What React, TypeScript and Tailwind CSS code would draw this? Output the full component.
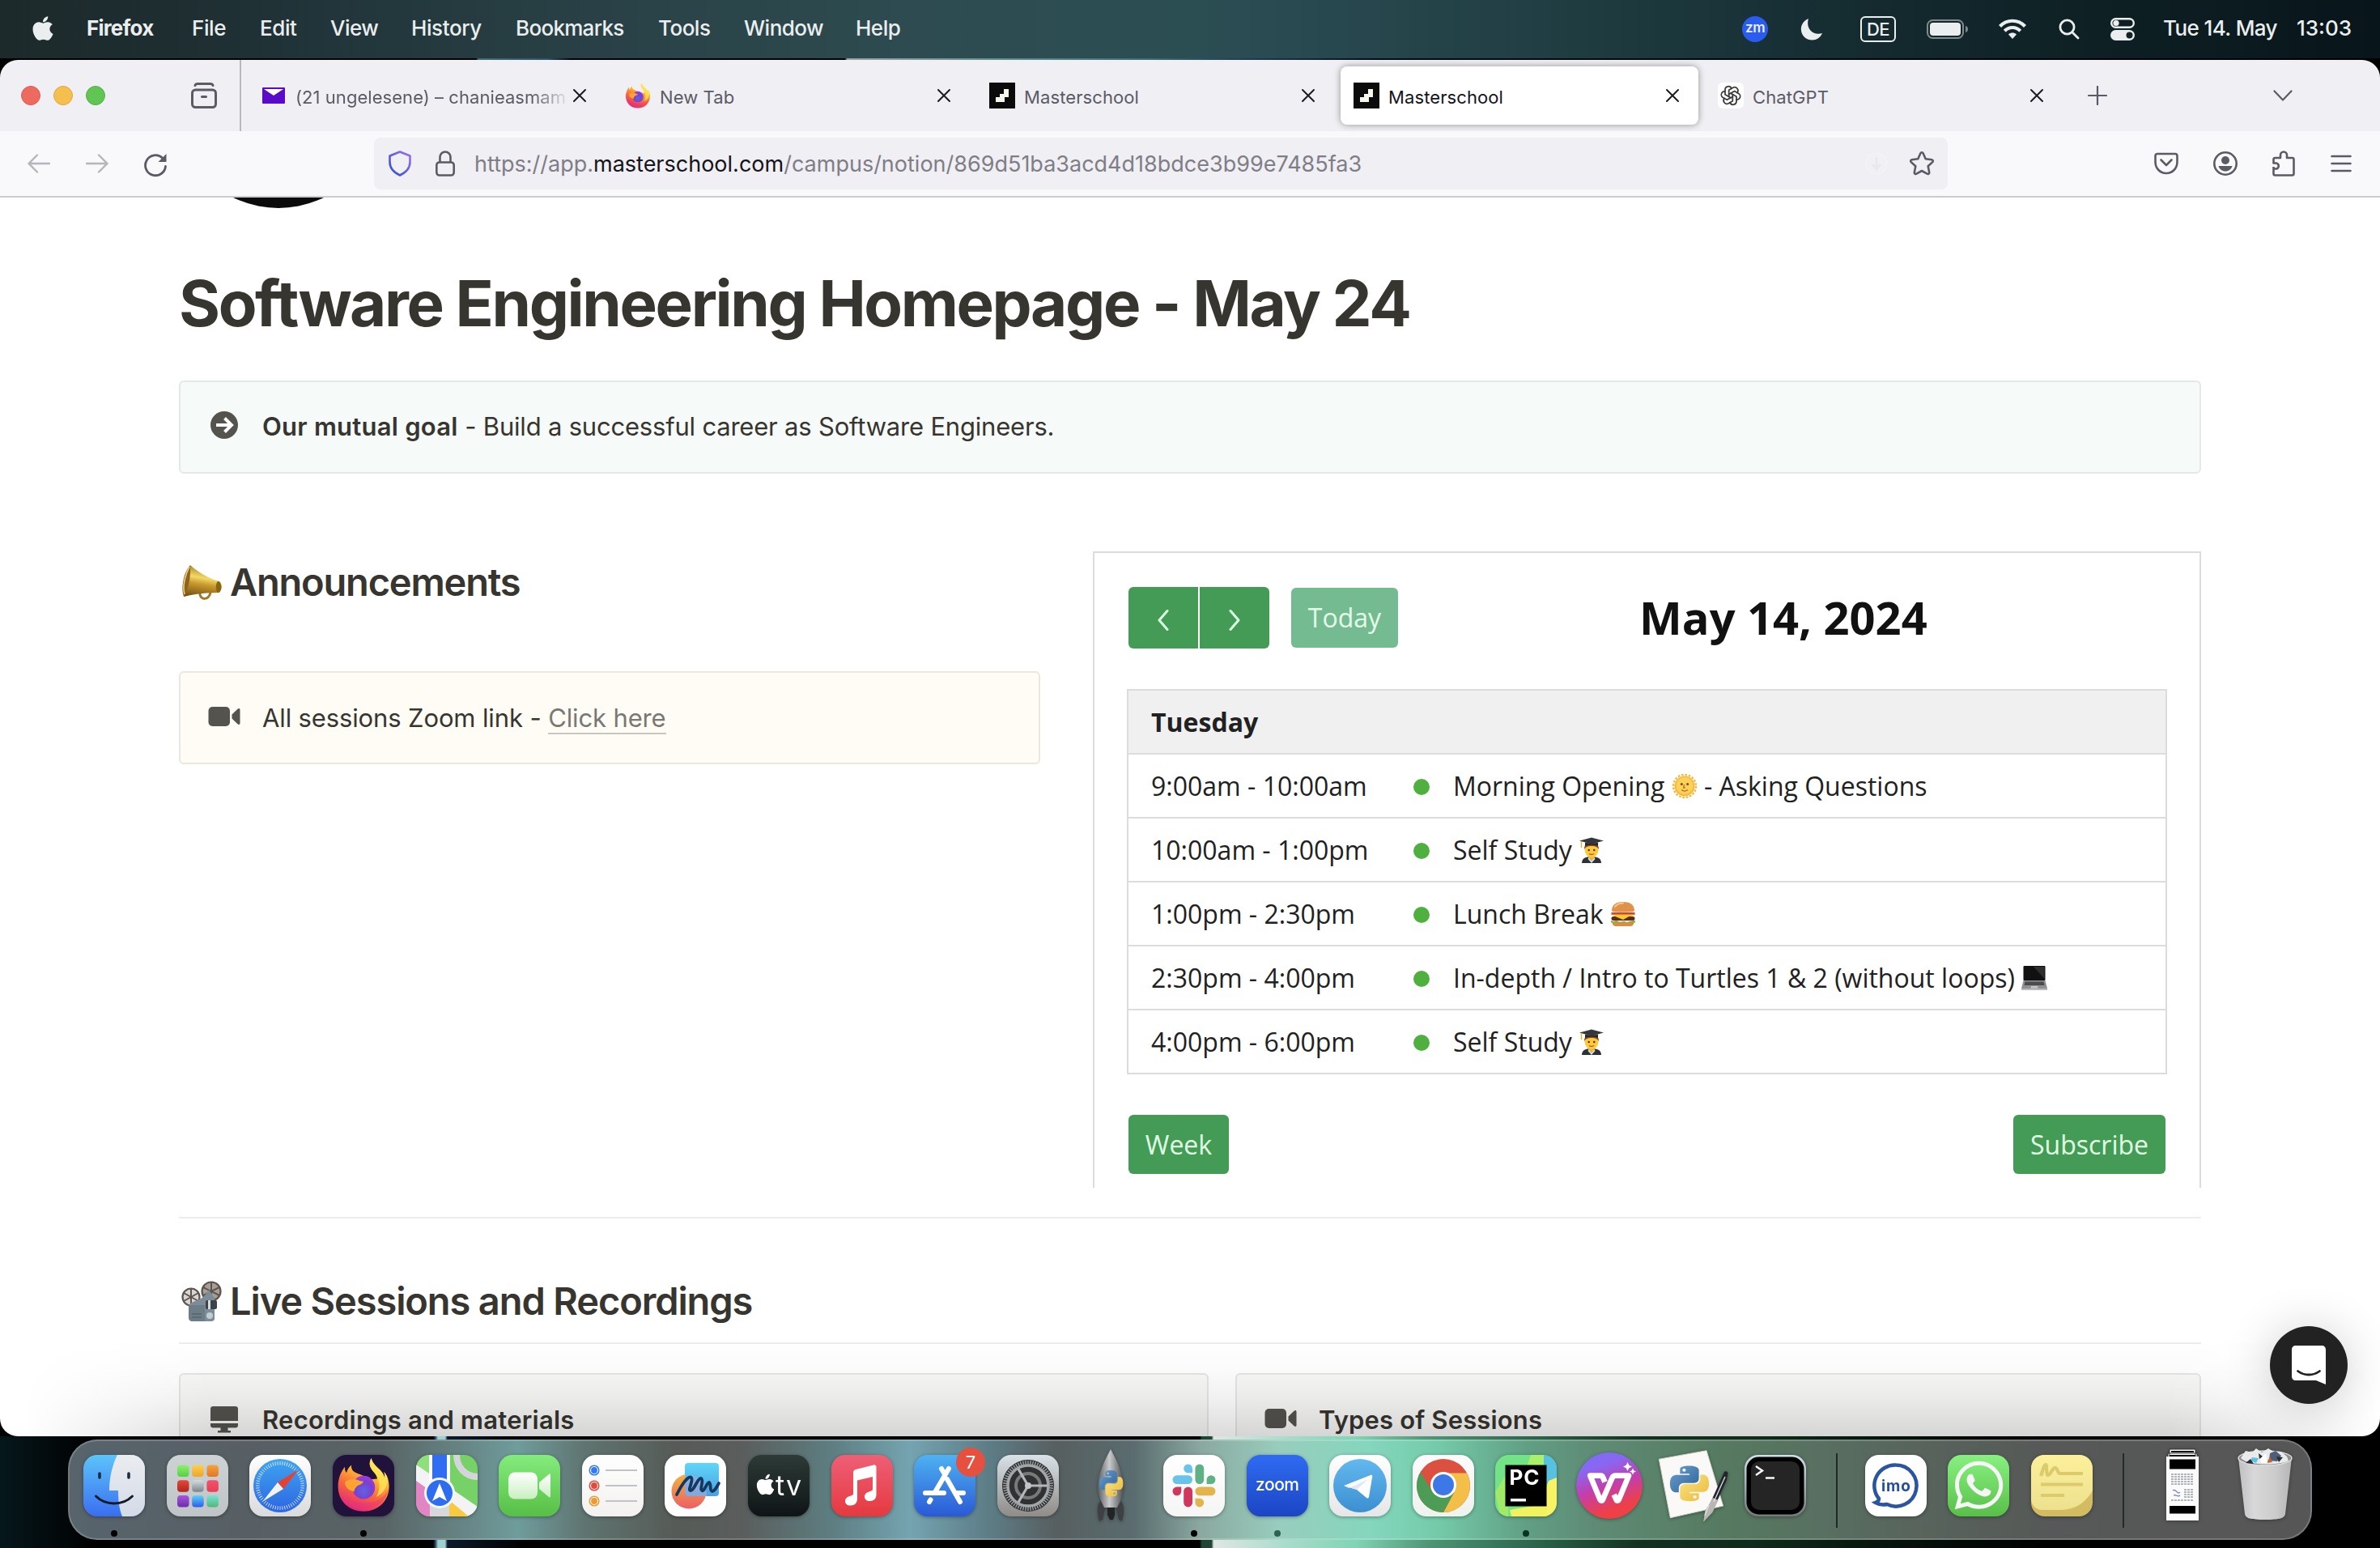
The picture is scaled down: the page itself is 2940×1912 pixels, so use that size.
import React from "react";
import { FaApple, FaWhatsapp } from "react-icons/fa";
import { TbBrandOpenai } from "react-icons/tb";

const PY_TOP =
  "M14.25.18l.9.2.73.26.59.3.45.32.34.34.25.34.16.33.1.3.04.26.02.2-.01.13V8.5l-.05.63-.13.55-.21.46-.26.38-.3.31-.33.25-.35.19-.35.14-.33.1-.3.07-.26.04-.21.02H8.77l-.69.05-.59.14-.5.22-.41.27-.33.32-.27.35-.2.36-.15.37-.1.35-.07.32-.04.27-.02.21v3.06H3.17l-.21-.03-.28-.07-.32-.12-.35-.18-.36-.26-.36-.36-.35-.46-.32-.59-.28-.73-.21-.88-.14-1.05-.05-1.23.06-1.22.16-1.04.24-.87.32-.71.36-.57.4-.44.42-.33.42-.24.4-.16.36-.1.32-.05.24-.01h.16l.06.01h8.16v-.83H6.18l-.01-2.75-.02-.37.05-.34.11-.31.17-.28.25-.26.31-.23.38-.2.44-.18.51-.15.58-.12.64-.1.71-.06.77-.04.84-.02 1.27.05zm-6.3 1.98l-.23.33-.08.41.08.41.23.34.33.22.41.09.41-.09.33-.22.23-.34.08-.41-.08-.41-.23-.33-.33-.22-.41-.09-.41.09z";

function PythonMark() {
  return (
    <>
      <path d={PY_TOP} fill="url(#pyBlue)" />
      <path d={PY_TOP} fill="url(#pyYellow)" transform="rotate(180 12 12)" />
    </>
  );
}

function SharedGradients() {
  return (
    <svg width="0" height="0" className="absolute">
      <defs>
        <linearGradient id="pyBlue" x1="0" y1="0" x2="1" y2="1">
          <stop offset="0" stopColor="#6aa0d0" />
          <stop offset="1" stopColor="#2f6296" />
        </linearGradient>
        <linearGradient id="pyYellow" x1="0" y1="0" x2="1" y2="1">
          <stop offset="0" stopColor="#e9b93a" />
          <stop offset="1" stopColor="#fbe483" />
        </linearGradient>
        <linearGradient id="ffBody" x1="0.8" y1="0" x2="0.35" y2="1">
          <stop offset="0" stopColor="#fff36b" />
          <stop offset="0.35" stopColor="#fdb833" />
          <stop offset="0.65" stopColor="#f76540" />
          <stop offset="1" stopColor="#e2267b" />
        </linearGradient>
        <radialGradient id="ffGlobe" cx="0.5" cy="0.65" r="0.65">
          <stop offset="0" stopColor="#5f63e0" />
          <stop offset="0.6" stopColor="#7a3fd0" />
          <stop offset="1" stopColor="#a33ae0" />
        </radialGradient>
        <linearGradient id="shield" x1="1" y1="0" x2="0" y2="1">
          <stop offset="0" stopColor="#9a6ff0" />
          <stop offset="1" stopColor="#2a4fd0" />
        </linearGradient>
      </defs>
    </svg>
  );
}

/* Firefox mark on a 64 unit square */
function FirefoxMark() {
  return (
    <>
      <path
        d="M41 1c-3 6-2 10 2 15 3 3 5 6 5 9l-10 1C33 20 22 19 19 15c-1-2-2-4-1-6-3 2-5 5-6 9-2-2-2-4-2-7C5 17 2 25 2 34c0 17 13 29 30 29s30-12 30-29c0-7-2-13-6-17 1 3 1 5 1 7C54 13 44 12 41 1z"
        fill="url(#ffBody)"
      />
      <path d="M41 1c-3 6-2 10 2 15 8 8 10 20 4 30 8-3 14-12 13-22-1-3-2-5-4-7 1 3 1 5 1 7C54 13 44 12 41 1z" fill="#fde85a" opacity="0.75" />
      <circle cx="32" cy="35" r="13.5" fill="url(#ffGlobe)" />
      <path
        d="M10 29c4-4 10-4 14-3 2 1 5 2 8 2-1 3-5 4-7 5-2 2-4 4-4 7-6-1-11-5-11-11z"
        fill="#fda32f"
      />
      <path d="M4 42c5 12 16 19 28 19 15 0 27-10 29-24-5 11-16 17-29 16C19 53 9 49 4 42z" fill="#e8367a" opacity="0.45" />
    </>
  );
}

function MasterschoolIcon() {
  return (
    <svg viewBox="0 0 32 32" className="size-8 shrink-0">
      <rect width="32" height="32" fill="#0b0b0b" />
      <path d="M8 24v-6h5v-4h5V8h6v10h-5v6z" fill="#f6f6ee" />
    </svg>
  );
}

function CloseIcon() {
  return (
    <svg viewBox="0 0 20 20" className="size-5 shrink-0" stroke="#1b1b22" strokeWidth="2" strokeLinecap="round">
      <path d="M3 3l14 14M17 3L3 17" />
    </svg>
  );
}

function MenuBar() {
  return (
    <div className="flex h-[72px] items-center bg-[linear-gradient(90deg,#1c2a2b_0%,#1e2d30_7%,#21353a_14%,#294146_25%,#2d4b50_38%,#2b4e53_50%,#28484f_56%,#213f44_64%,#1c373c_70%,#142a2f_79%,#0e2024_88%,#08151a_100%)] pb-[3px] font-['Inter'] text-[26px] leading-[32px] text-[#ebeeee]">
      <div className="flex w-[107px] shrink-0 pl-[39px]">
        <FaApple className="h-[34px] w-[28px]" />
      </div>
      <div className="w-[130px] font-bold tracking-[-0.8px]">Firefox</div>
      <div className="w-[84px] font-medium tracking-[-0.4px]">File</div>
      <div className="w-[87px] font-medium tracking-[-0.4px]">Edit</div>
      <div className="w-[100px] font-medium tracking-[-0.5px]">View</div>
      <div className="w-[129px] font-medium tracking-[-0.4px]">History</div>
      <div className="w-[176px] font-medium tracking-[-0.7px]">Bookmarks</div>
      <div className="w-[106px] font-medium tracking-[-0.5px]">Tools</div>
      <div className="w-[138px] font-medium tracking-[-0.5px]">Window</div>
      <div className="font-medium tracking-[-0.5px]">Help</div>

      <div className="ml-auto flex items-center pt-[2px]">
        <div className="flex size-8 items-center justify-center rounded-full bg-[#2a5cf0] pb-[3px] text-[17px] font-semibold leading-none tracking-[-0.5px]">zm</div>
        <svg viewBox="0 0 28 28" className="ml-[40px] size-7" fill="#ebeeee">
          <path d="M10 1C3 4 0 10 1 16c1 7 7 11.500 13.500 11.500C20 27.500 25 24 27 19 21 21 15 19 12 15 9 11 8.500 6 10 1z" />
        </svg>
        <div className="ml-[46px] flex h-8 w-[44px] items-center justify-center rounded-[6px] border-2 border-[#ebeeee] text-[22px] font-medium leading-none tracking-[-0.5px]">DE</div>
        <svg viewBox="0 0 52 24" className="ml-[38px] h-6 w-[52px]">
          <rect x="1" y="1" width="44" height="22" rx="6.500" fill="none" stroke="#ebeeee" strokeOpacity="0.5" strokeWidth="2" />
          <rect x="4" y="4" width="38" height="16" rx="4" fill="#ebeeee" />
          <path d="M48 8c4 1 4 7 0 8z" fill="#ebeeee" fillOpacity="0.5" />
        </svg>
        <svg viewBox="0 0 34 25" className="ml-[37px] h-[25px] w-[34px]" fill="none" stroke="#ebeeee" strokeWidth="4.200">
          <path d="M1.500 9.500C10 0.500 24 0.500 32.500 9.500" />
          <path d="M7.300 15.200c5.400-5.600 14-5.600 19.400 0" />
          <path d="M17 25l-5-5.500c3-2.600 7-2.600 10 0z" fill="#ebeeee" stroke="none" />
        </svg>
        <svg viewBox="0 0 26 26" className="ml-[40px] size-[26px]" fill="none" stroke="#ebeeee" strokeWidth="2.800" strokeLinecap="round">
          <circle cx="10.500" cy="10.500" r="8.600" />
          <path d="M17 17l7 7" />
        </svg>
        <svg viewBox="0 0 30 28" className="ml-[38px] h-7 w-[30px]">
          <rect x="1.200" y="1.200" width="27.600" height="10.600" rx="5.300" fill="none" stroke="#ebeeee" strokeWidth="2.400" />
          <circle cx="7" cy="6.500" r="3.600" fill="#ebeeee" />
          <rect y="15" width="30" height="13" rx="6.500" fill="#ebeeee" />
          <circle cx="23.500" cy="21.500" r="4" fill="#142328" />
        </svg>
        <div className="ml-[35px] w-[165px] whitespace-nowrap pb-[2px] font-medium tracking-[-0.6px]">Tue 14. May</div>
        <div className="w-[103px] pb-[2px] font-medium tracking-[0px]">13:03</div>
      </div>
    </div>
  );
}

type TabProps = { icon: React.ReactNode; title: string; active?: boolean; fade?: boolean };

function Tab({ icon, title, active, fade }: TabProps) {
  return (
    <div
      className={
        active
          ? "mr-2 flex h-[72px] w-[442px] shrink-0 items-center rounded-[8px] bg-white pl-4 pr-[22px] text-[#15141a] shadow-[0_0_8px_rgba(0,0,0,0.4)]"
          : "mr-2 flex h-[72px] w-[442px] shrink-0 items-center pl-4 pr-[22px] text-[#5b5b66]"
      }
    >
      <div className="flex w-8 shrink-0 justify-center">{icon}</div>
      <div
        className={
          fade
            ? "ml-[11px] w-[340px] whitespace-nowrap pt-[3px] text-[22px] leading-[28px] tracking-[0.05px] [mask-image:linear-gradient(90deg,#000_86%,transparent_100%)]"
            : "ml-[11px] grow overflow-hidden whitespace-nowrap pt-[3px] text-[22px] leading-[28px] tracking-[0.1px]"
        }
      >
        {title}
      </div>
      <div className="ml-auto">
        <CloseIcon />
      </div>
    </div>
  );
}

function TabStrip() {
  return (
    <div className="flex h-[88px] items-center bg-[#f0eff4] font-['Inter']">
      <div className="flex w-[296px] shrink-0 items-center pl-[26px]">
        <div className="size-6 rounded-full border border-[#d95f55] bg-[#ec6a5e]" />
        <div className="ml-4 size-6 rounded-full border border-[#dfa840] bg-[#f4bf4f]" />
        <div className="ml-4 size-6 rounded-full border border-[#52b043] bg-[#61c554]" />
        <svg viewBox="0 0 32 32" className="ml-[106px] size-8" fill="none" stroke="#5b5b66" strokeWidth="3" strokeLinecap="round">
          <path d="M5 3.500c.5-1.500 1-2 3-2h16c2 0 2.500.5 3 2" />
          <rect x="1.500" y="9" width="29" height="21.500" rx="4" />
          <path d="M13.500 17.500h5" />
        </svg>
      </div>
      <div className="h-full w-[2px] shrink-0 bg-[#b9b8be]" />
      <div className="flex items-center pl-2">
        <Tab
          fade
          title="(21 ungelesene) – chanieasmam"
          icon={
            <svg viewBox="0 0 28 20" className="h-5 w-7">
              <rect width="28" height="20" rx="1" fill="#5a0bc9" />
              <path d="M2 2h24L14 10z" fill="#fff" />
            </svg>
          }
        />
        <Tab
          title="New Tab"
          icon={
            <svg viewBox="0 0 64 64" className="size-8">
              <FirefoxMark />
            </svg>
          }
        />
        <Tab title="Masterschool" icon={<MasterschoolIcon />} />
        <Tab title="Masterschool" active icon={<MasterschoolIcon />} />
        <Tab
          title="ChatGPT"
          icon={
            <div className="flex size-8 items-center justify-center rounded-[6px] bg-white">
              <TbBrandOpenai size={28} strokeWidth={1.5} color="#3a3a3a" />
            </div>
          }
        />
      </div>
      <svg viewBox="0 0 24 24" className="ml-[23px] size-6 shrink-0" stroke="#5b5b66" strokeWidth="2.200" strokeLinecap="round">
        <path d="M12 1v22M1 12h22" />
      </svg>
      <svg viewBox="0 0 24 14" className="ml-[205px] h-[14px] w-6 shrink-0" fill="none" stroke="#5b5b66" strokeWidth="2.200" strokeLinecap="round" strokeLinejoin="round">
        <path d="M1.500 1.500L12 12.500 22.500 1.500" />
      </svg>
    </div>
  );
}

function NavBar() {
  return (
    <div className="flex h-[82px] items-center border-b-2 border-[#cccccf] bg-[#f9f9fb] font-['Inter']">
      <svg viewBox="0 0 28 24" className="ml-[34px] h-6 w-7" fill="none" stroke="#b5b5ba" strokeWidth="2.400" strokeLinecap="round" strokeLinejoin="round">
        <path d="M27 12H1.500M12 1.500L1.500 12 12 22.500" />
      </svg>
      <svg viewBox="0 0 28 24" className="ml-[44px] h-6 w-7" fill="none" stroke="#b5b5ba" strokeWidth="2.400" strokeLinecap="round" strokeLinejoin="round">
        <path d="M1 12h25.500M16 1.500L26.500 12 16 22.500" />
      </svg>
      <svg viewBox="0 0 30 30" className="ml-[43px] mt-1 size-[30px]" fill="none" stroke="#5b5b66" strokeWidth="2.800" strokeLinecap="round">
        <path d="M27.500 16.500A12.500 12.500 0 1 1 23.500 6" />
        <path d="M28.500 1v10h-10z" fill="#5b5b66" stroke="none" />
      </svg>
      <div className="ml-[255px] flex h-16 w-[1944px] items-center rounded-[8px] bg-[#f0eff4]">
        <svg viewBox="0 0 28 32" className="ml-[18px] h-8 w-7" fill="none" stroke="url(#shield)" strokeWidth="2.600" strokeLinejoin="round">
          <path d="M14 1.500L26.500 6.500V14c0 8-5 13-12.500 16.500C6.500 27 1.500 22 1.500 14V6.500z" />
        </svg>
        <svg viewBox="0 0 24 32" className="ml-[30px] h-8 w-6" fill="none" stroke="#5b5b66" strokeWidth="2.600">
          <rect x="1.300" y="14.500" width="21.400" height="16" rx="3.500" />
          <path d="M5.500 14V8a6.500 6.500 0 0 1 13 0v6" />
        </svg>
        <div className="ml-[24px] whitespace-nowrap pt-[2px] text-[27px] leading-[36px] text-[#7f7e86]">
          https://app.<span className="text-[#15141a]">masterschool.com</span>/campus/notion/869d51ba3acd4d18bdce3b99e7485fa3
        </div>
        <svg viewBox="0 0 28 30" className="ml-auto h-[30px] w-7">
          <circle cx="14" cy="15" r="13" fill="#f1f0f4" stroke="#f6f5f8" />
          <path d="M14 7v14m-5-5l5 6 5-6" fill="none" stroke="#e9e8ec" strokeWidth="3" />
        </svg>
        <svg viewBox="0 0 32 32" className="ml-[26px] mr-4 size-8" fill="none" stroke="#5b5b66" strokeWidth="2.600" strokeLinejoin="round">
          <path d="M16 2.200c.7 0 1.300.4 1.600 1.100l3.100 7 7.600.9c1.500.2 2 1.900 1 2.900l-5.600 5.200 1.500 7.600c.2 1.500-1.300 2.500-2.600 1.800L16 25l-6.600 3.700c-1.300.7-2.800-.3-2.600-1.800l1.500-7.600-5.600-5.200c-1-1-.5-2.700 1-2.900l7.600-.9 3.100-7c.3-.7.900-1.100 1.600-1.100z" />
        </svg>
      </div>
      <svg viewBox="0 0 30 28" className="ml-[255px] h-7 w-[30px]" fill="none" stroke="#5b5b66" strokeWidth="2.600" strokeLinecap="round" strokeLinejoin="round">
        <path d="M4 2h22c1.500 0 2.500 1 2.500 2.500V12c0 8-6 14-13.500 14S1.500 20 1.500 12V4.500C1.500 3 2.500 2 4 2z" />
        <path d="M8.500 9.500L15 16l6.500-6.500" />
      </svg>
      <svg viewBox="0 0 30 30" className="ml-[43px] size-[30px]">
        <circle cx="15" cy="15" r="13.700" fill="none" stroke="#5b5b66" strokeWidth="2.600" />
        <circle cx="15" cy="11" r="5" fill="#5b5b66" />
        <path d="M6.500 18h17c-1 4-4.500 6.500-8.500 6.500S7.500 22 6.500 18z" fill="#5b5b66" />
      </svg>
      <svg viewBox="0 0 28 32" className="ml-[43px] h-8 w-7" fill="none" stroke="#5b5b66" strokeWidth="2.600" strokeLinejoin="round">
        <path d="M1.500 20v8.500c0 1 .8 2 2 2h21c1.200 0 2-1 2-2V11c0-1.200-.8-2-2-2h-6.500V5.500a4 4 0 0 0-8 0V9H3.500c-1.200 0-2 .8-2 2v4.500H5a3.600 3.600 0 0 1 0 7H1.500" />
      </svg>
      <svg viewBox="0 0 26 22" className="ml-[44px] h-[22px] w-[26px]" stroke="#5b5b66" strokeWidth="2.600" strokeLinecap="round">
        <path d="M1.500 2h23M1.500 11h23M1.500 20h23" />
      </svg>
    </div>
  );
}

function Megaphone() {
  return (
    <svg viewBox="0 0 52 44" className="h-11 w-[52px]">
      <defs>
        <linearGradient id="mega" x1="0.3" y1="0" x2="0.1" y2="1">
          <stop offset="0" stopColor="#a8852a" />
          <stop offset="0.35" stopColor="#f3d968" />
          <stop offset="0.55" stopColor="#c99a2e" />
          <stop offset="1" stopColor="#6e4d12" />
        </linearGradient>
      </defs>
      <path d="M24 35c-1 10 12 10 13-1" fill="none" stroke="#a07a28" strokeWidth="3" />
      <path d="M12 1c10 9 24 17 36 20 4 3 4 11-1 14-13 0-28 1-43 5z" fill="url(#mega)" />
      <path d="M46 21c-3 3-3 11 0 14l2-.3c3-3 3-10 0-13.400z" fill="#8a6518" />
      <path d="M12 1C4 9 0 29 4 40c6-9 9-26 8-39z" fill="#8b6420" />
      <path d="M11 3C6 12 2 27 5 37" fill="none" stroke="#efd27a" strokeWidth="1.600" />
    </svg>
  );
}

function Projector() {
  return (
    <svg viewBox="0 0 50 50" className="size-[50px]">
      <g fill="#a89e94" stroke="#5d5550" strokeWidth="2.200">
        <circle cx="37" cy="13" r="11.500" />
        <circle cx="12" cy="20" r="10.500" fill="#d9d6d2" />
      </g>
      <path d="M37 2v22M27 8l20 10M27 18l20-10M12 10v20M3 15l18 10M3 25l18-10" stroke="#5d5550" strokeWidth="2" />
      <path d="M9 30c4-5 15-6 20-12l5-7 7 10v26c0 2-2 3-4 3H14c-3 0-5-2-5-5z" fill="#7d8d97" />
      <path d="M9 30h20v20H14c-3 0-5-2-5-5z" fill="#6d7d88" />
      <rect x="30" y="24" width="14" height="11" rx="2" fill="#3b4248" />
      <rect x="33" y="24" width="3" height="11" fill="#d4dade" />
      <circle cx="35" cy="43" r="4" fill="#c3ccd1" />
      <path d="M13 41h12M13 45h12" stroke="#56646d" strokeWidth="1.500" />
    </svg>
  );
}

function SunFace() {
  return (
    <svg viewBox="0 0 32 32" className="inline-block size-8">
      <circle cx="16" cy="16" r="14" fill="none" stroke="#f6b73c" strokeWidth="2.500" strokeDasharray="2.500 1.900" />
      <circle cx="16" cy="16" r="12.500" fill="#f9b93c" />
      <circle cx="16" cy="15.500" r="10.500" fill="#fdd25c" />
      <circle cx="12.300" cy="13.500" r="1.500" fill="#7a4a12" />
      <circle cx="19.700" cy="13.500" r="1.500" fill="#7a4a12" />
      <path d="M15.500 14l-.8 4h2M12 20.500c2.500 2 5.500 2 8 0" fill="none" stroke="#b86f1c" strokeWidth="1.300" />
    </svg>
  );
}

function Student() {
  return (
    <svg viewBox="0 0 32 32" className="inline-block size-8">
      <path d="M4 32c0-6 5-8 12-8s12 2 12 8z" fill="#2d3035" />
      <path d="M12 22h8v3l-4 4-4-4z" fill="#f2b632" />
      <path d="M12.500 25L16 29l3.500-4 1 2-4.500 5-4.500-5z" fill="#d9dde0" />
      <ellipse cx="16" cy="15.500" rx="8.500" ry="9.500" fill="#ffc93c" />
      <path d="M7 15c0-5 2-8 9-8s9 3 9 8c-2-3-4-4-9-4s-7 1-9 4z" fill="#8a4a1f" />
      <circle cx="12.700" cy="16" r="1.200" fill="#47290f" />
      <circle cx="19.300" cy="16" r="1.200" fill="#47290f" />
      <path d="M13 20.500c2 1.300 4 1.300 6 0" fill="none" stroke="#a3591d" strokeWidth="1.200" />
      <path d="M1 4.500L16 .5l15 4-15 4z" fill="#33363b" />
      <path d="M8 6.500v4.500c4-1.800 12-1.800 16 0V6.500l-8 2z" fill="#25272b" />
      <path d="M3.500 5v8" stroke="#e0b137" strokeWidth="1.400" />
    </svg>
  );
}

function Burger() {
  return (
    <svg viewBox="0 0 32 32" className="inline-block size-8">
      <path d="M2 12C2 4 8 1 16 1s14 3 14 11c0 2-28 2-28 0z" fill="#e0924a" />
      <path d="M6 7c2-3 6-4.500 10-4.500" fill="none" stroke="#f7c88c" strokeWidth="2" strokeLinecap="round" />
      <path d="M1.500 14h29v3h-29z" fill="#d8412e" />
      <path d="M1 16.500h30L24 20l-8 2.500L8 19z" fill="#fbc931" />
      <rect x="1.500" y="19" width="29" height="5" rx="2.500" fill="#5c2d17" />
      <path d="M4 18l12 5 9-5z" fill="#fbc931" />
      <path d="M1 24c4 2.500 6-1 9 1s6-1 9 .5 7-2 12-1v2H1z" fill="#6fae35" />
      <path d="M2.500 26h27c0 3-2 5-5 5h-17c-3 0-5-2-5-5z" fill="#dd8b40" />
    </svg>
  );
}

function Laptop() {
  return (
    <svg viewBox="0 0 32 32" className="inline-block size-8">
      <rect x="2.500" y="1" width="27" height="18" rx="1" fill="#111" />
      <path d="M15 2h13.500v15z" fill="#2e2e2e" />
      <path d="M2.500 19h27L32 29H0z" fill="#8f9092" />
      <path d="M4.500 20.500h23l1 4.500h-25z" fill="#4a4b4d" />
      <path d="M12 26h8l.5 2.500h-9z" fill="#c5c6c8" />
      <path d="M0 29h32v2H0z" fill="#b9babc" />
    </svg>
  );
}

function VideoIcon() {
  return (
    <svg viewBox="0 0 40 24" className="h-6 w-10" fill="#55534e">
      <rect x="0.500" width="26.500" height="24" rx="5" />
      <path d="M29.500 9.500L36.500 2.800c1.500-1.300 3-.8 3 .9v16.600c0 1.700-1.500 2.200-3 .9L29.500 14.500z" />
    </svg>
  );
}

const events = [
  { time: "9:00am - 10:00am", before: "Morning Opening ", emoji: <SunFace />, after: " - Asking Questions" },
  { time: "10:00am - 1:00pm", before: "Self Study ", emoji: <Student />, after: "" },
  { time: "1:00pm - 2:30pm", before: "Lunch Break ", emoji: <Burger />, after: "" },
  { time: "2:30pm - 4:00pm", before: "In-depth / Intro to Turtles 1 & 2 (without loops) ", emoji: <Laptop />, after: "" },
  { time: "4:00pm - 6:00pm", before: "Self Study ", emoji: <Student />, after: "" },
];

function Calendar() {
  return (
    <div className="h-[786px] w-[1369px] border-x-2 border-t-2 border-[#dcdcdc] px-[40px] pt-[42px] font-['Open_Sans'] text-[32px] leading-[44px] text-[#212121]">
      <div className="flex h-[76px] items-center pl-[2px]">
        <div className="flex h-[76px] gap-[2px] overflow-hidden rounded-[6px]">
          {["M18 3.500L8 15l10 11.500", "M8 3.500L18 15 8 26.500"].map((d) => (
            <div key={d} className="flex h-[76px] w-[86px] items-center justify-center bg-[#449b56] pt-[6px]">
              <svg viewBox="0 0 26 30" className="h-[30px] w-[26px]" fill="none" stroke="#d9ffdf" strokeWidth="3" strokeLinecap="round" strokeLinejoin="round">
                <path d={d} />
              </svg>
            </div>
          ))}
        </div>
        <div className="ml-[27px] flex h-[74px] w-[132px] items-center justify-center rounded-[6px] bg-[#74bb91] text-[#e4fde9]">Today</div>
        <div className="ml-[298px] whitespace-nowrap pb-[3px] text-[56px] font-bold text-[#111111]">May 14, 2024</div>
      </div>
      <div className="mt-[50px] border-2 border-[#dcdcdc]">
        <div className="flex h-[77px] items-center bg-[#f0f0f0] pl-[28px] font-bold">Tuesday</div>
        {events.map((e) => (
          <div key={e.time} className="flex h-[79px] items-center border-t-2 border-[#dcdcdc] pl-[28px]">
            <div className="w-[324px]">{e.time}</div>
            <div className="mt-[3px] size-5 rounded-full bg-[#4fb040]" />
            <div className="ml-[29px] flex items-center whitespace-pre">
              {e.before}
              {e.emoji}
              {e.after}
            </div>
          </div>
        ))}
      </div>
      <div className="mt-[50px] flex justify-between px-[2px] text-[#e0ffe4]">
        <div className="flex h-[73px] w-[124px] items-center justify-center rounded-[6px] bg-[#449b56]">Week</div>
        <div className="flex h-[73px] w-[188px] items-center justify-center rounded-[6px] bg-[#449b56]">Subscribe</div>
      </div>
    </div>
  );
}

function Page() {
  return (
    <div className="relative h-[1530px] overflow-hidden bg-white px-[221px] font-['Inter'] text-[31px] text-[#37352f]">
      <div className="-ml-[4px] flex h-[13px] items-end overflow-hidden">
        <div className="size-[254px] shrink-0 rounded-full bg-[#0b0b0b]" />
      </div>
      <h1 className="mt-[70px] h-[96px] whitespace-nowrap text-[78px] font-bold leading-[96px] tracking-[-2.4px]">
        Software Engineering Homepage - May 24
      </h1>
      <div className="mt-[47px] flex h-[115px] items-center rounded-[6px] border-2 border-[#e4e8e7] bg-[#f6faf9] pl-[37px]">
        <svg viewBox="0 0 34 34" className="-mt-[5px] size-[34px]">
          <circle cx="17" cy="17" r="17" fill="#55534e" />
          <path d="M7 17h18M17.500 8.500L26 17l-8.500 8.500" fill="none" stroke="#fff" strokeWidth="4" />
        </svg>
        <div className="ml-[30px] whitespace-nowrap tracking-[-0.2px]">
          <span className="font-semibold tracking-[0.25px]">Our mutual goal</span> - Build a successful career as Software Engineers.
        </div>
      </div>
      <div className="mt-[96px] flex justify-between">
        <div className="w-[1064px] pt-2">
          <h2 className="flex h-[60px] items-center text-[47px] font-semibold leading-[60px] tracking-[-1.2px]">
            <div className="w-[63px] pl-[2px]">
              <Megaphone />
            </div>
            Announcements
          </h2>
          <div className="mt-[80px] flex h-[115px] items-center rounded-[6px] border-2 border-[#ebe7de] bg-[#fffcf5] pl-[34px]">
            <div className="-mt-1">
              <VideoIcon />
            </div>
            <div className="ml-[27px] whitespace-nowrap pt-[2px] tracking-[-0.13px]">
              All sessions Zoom link - <span className="border-b-2 border-[#c9c6bf] text-[#7a7872]">Click here</span>
            </div>
          </div>
        </div>
        <Calendar />
      </div>
      <div className="mt-[36px] h-[2px] bg-[#ededec]" />
      <h2 className="mt-[72px] flex h-[60px] items-center text-[47px] font-semibold leading-[60px] tracking-[-1.12px]">
        <div className="w-[63px] pl-[3px]">
          <Projector />
        </div>
        Live Sessions and Recordings
      </h2>
      <div className="mt-[21px] h-[2px] bg-[#ededec]" />
      <div className="mt-[36px] flex justify-between">
        <div className="flex h-[116px] w-[1272px] items-center rounded-[6px] border-2 border-[#e6e6e5] bg-[#f9f9f8] pl-[37px]">
          <svg viewBox="0 0 34 33" className="-mt-[2px] h-[33px] w-[34px]" fill="#55534e">
            <path d="M3 0h28c1.700 0 3 1.300 3 3v15H0V3c0-1.700 1.300-3 3-3zM0 21h34v2.500c0 1.700-1.300 3-3 3H21.500V30H25v2.500H9V30h3.500v-3.500H3c-1.700 0-3-1.300-3-3z" />
          </svg>
          <div className="ml-[30px] pt-[1px] font-semibold tracking-[0.25px]">Recordings and materials</div>
        </div>
        <div className="flex h-[116px] w-[1193px] items-center rounded-[6px] border-2 border-[#e6e6e5] bg-[#f9f9f8] pl-[34px]">
          <div className="-mt-1">
            <VideoIcon />
          </div>
          <div className="ml-[27px] pt-[1px] font-semibold tracking-[0.15px]">Types of Sessions</div>
        </div>
      </div>
      <div className="absolute inset-x-0 bottom-0 h-[120px] bg-[linear-gradient(180deg,transparent_0%,rgba(0,0,0,0.015)_30%,rgba(0,0,0,0.06)_62%,rgba(0,0,0,0.14)_100%)] [mask-image:linear-gradient(90deg,transparent_1%,#000_9%,#000_91%,transparent_100%)]" />
      <div className="absolute bottom-[40px] right-[40px] flex size-[96px] items-center justify-center rounded-full bg-[#222222] shadow-[0_4px_60px_rgba(0,0,0,0.2)]">
        <svg viewBox="0 0 42 48" className="h-12 w-[42px]">
          <path d="M5 0h32c3 0 5 2 5 5v43l-12-5H5c-3 0-5-2-5-5V5c0-3 2-5 5-5z" fill="#fff" />
          <path d="M7.500 31.500c8 6 19 6 27 0" fill="none" stroke="#222" strokeWidth="2.800" strokeLinecap="round" />
        </svg>
      </div>
    </div>
  );
}

/* ---------- Dock ---------- */

type CellProps = { children: React.ReactNode; dot?: string; badge?: string };

function DockCell({ children, dot, badge }: CellProps) {
  return (
    <div className="relative flex h-[124px] w-[102.6px] shrink-0 flex-col items-center pt-[19px]">
      <svg viewBox="0 0 76 76" className="size-[76px] shrink-0 overflow-visible drop-shadow-[0_1px_2px_rgba(0,0,0,0.35)]">
        {children}
      </svg>
      {dot && <div className={dot} />}
      {badge && (
        <div className="absolute left-[65px] top-[10px] flex size-9 items-center justify-center rounded-full bg-[#e5503f] text-[22px] leading-none text-white">
          {badge}
        </div>
      )}
    </div>
  );
}

function Grad({ id, from, to }: { id: string; from: string; to: string }) {
  return (
    <linearGradient id={id} x1="0" y1="0" x2="0" y2="1">
      <stop offset="0" stopColor={from} />
      <stop offset="1" stopColor={to} />
    </linearGradient>
  );
}

function Tile({ id, from, to }: { id: string; from: string; to: string }) {
  return (
    <>
      <defs>
        <Grad id={id} from={from} to={to} />
      </defs>
      <rect width="76" height="76" rx="17" fill={`url(#${id})`} />
    </>
  );
}

function DockSeparator() {
  return (
    <div className="flex h-[124px] w-[46px] shrink-0 justify-center pl-[3px] pt-[17px]">
      <div className="h-[92px] w-[2px] bg-[#1f2b26]" />
    </div>
  );
}

const launchColors = [
  ["#8df06f", "#58cf41"], ["#fbd14a", "#efa42d"], ["#f3a33b", "#e2762c"],
  ["#e4483a", "#b3251c"], ["#d5dde0", "#7d8487"], ["#f2536b", "#e73f58"],
  ["#a856dd", "#6d2cae"], ["#5ed2fb", "#2c5de8"], ["#79e3d5", "#51b878"],
];

const dialTicks = Array.from({ length: 60 }, (_, i) => i * 6);

function Dock() {
  const dot = "mt-[17px] size-2 shrink-0 rounded-full bg-black";
  const greenDot = "mt-[17px] size-2 shrink-0 rounded-full bg-[#2d6152]";
  const darkGreenDot = "mt-[17px] size-2 shrink-0 rounded-full bg-[#06371b]";
  return (
    <div className="mx-[84px] flex h-[124px] overflow-hidden rounded-[36px] border-2 border-white/20 bg-[linear-gradient(90deg,#57646c_0%,#575f64_8%,#596466_14%,#64807f_17%,#6f9c9c_20%,#5f7470_23%,#565b57_27%,#5a5d5c_30%,#5d7e81_34%,#74a4b0_37.500%,#5d7d86_41%,#575f60_44%,#5a6c6f_47.500%,#8aa9a0_50.500%,#98cdbd_54%,#84d6bd_58%,#74cbaa_61%,#619f84_65%,#5f8b75_68%,#567960_74%,#587061_78%,#58655d_82%,#565957_88%,#565656_100%)] pl-[4px] font-['Inter'] [&>*]:-mt-[2px]">
      {/* Finder */}
      <DockCell dot={dot}>
        <defs>
          <Grad id="fnL" from="#5cc4fa" to="#3a6ef0" />
          <Grad id="fnR" from="#ebecf0" to="#d3dbe8" />
          <clipPath id="tile"><rect width="76" height="76" rx="17" /></clipPath>
        </defs>
        <g clipPath="url(#tile)">
          <rect width="76" height="76" fill="url(#fnL)" />
          <path d="M42 0c-7 14-10 30-10 44h11c0 12 1 22 5 32h28V0z" fill="url(#fnR)" />
        </g>
        <path d="M20 23v5M56 23v5" stroke="#1d2b3d" strokeWidth="3.600" strokeLinecap="round" />
        <path d="M15.500 51c12 12 33 12 45 0" fill="none" stroke="#151c26" strokeWidth="3" strokeLinecap="round" />
      </DockCell>
      {/* Launchpad */}
      <DockCell>
        <Tile id="lp" from="#cdd2d5" to="#bfc4c6" />
        {launchColors.map(([a, b], i) => (
          <g key={a}>
            <defs><Grad id={"lp" + i} from={a} to={b} /></defs>
            <rect x={13 + (i % 3) * 18.200} y={12.500 + Math.floor(i / 3) * 18.700} width="14.500" height="14.500" rx="4" fill={`url(#lp${i})`} />
          </g>
        ))}
      </DockCell>
      {/* Safari */}
      <DockCell>
        <Tile id="sf" from="#ffffff" to="#d9dadc" />
        <defs><Grad id="sfb" from="#3fa4f0" to="#2d66e2" /></defs>
        <circle cx="38" cy="38" r="33" fill="url(#sfb)" />
        {dialTicks.map((a) => (
          <path key={a} d="M38 8v4.500" stroke="#fff" strokeOpacity="0.8" strokeWidth="0.900" transform={`rotate(${a} 38 38)`} />
        ))}
        <path d="M61 18L42 42 35 34z" fill="#e6412f" />
        <path d="M16 58l26-16-7-8z" fill="#f2f2f2" />
      </DockCell>
      {/* Firefox */}
      <DockCell dot={dot}>
        <rect width="76" height="76" rx="17" fill="#20123a" />
        <g transform="translate(4.500 3) scale(1.050 1.060)"><FirefoxMark /></g>
      </DockCell>
      {/* Maps */}
      <DockCell>
        <g clipPath="url(#tile)">
          <rect width="76" height="76" fill="#76d267" />
          <path d="M0 0h20v28L0 14z" fill="#8fe07c" />
          <path d="M0 12l76 52v12H52L0 34z" fill="#f3f3f5" />
          <path d="M0 32l17 12v32H0z" fill="#e285c5" />
          <path d="M41 56l24 20H41z" fill="#f9c940" />
          <path d="M17 44h24v32H17z" fill="#d7d8da" />
          <path d="M50 0c0 15 11 27 26 27" fill="none" stroke="#d4d5d8" strokeWidth="8" />
          <path d="M20 0h18v36H20z" fill="#2f6df2" />
          <path d="M16 0h4v36h-4zM38 0h4v36h-4z" fill="#fff" />
        </g>
        <circle cx="29" cy="47" r="19" fill="#f4f6fa" />
        <circle cx="29" cy="47" r="16" fill="#2e6cf0" />
        <path d="M29 35l9 22-9-5-9 5z" fill="#fff" />
      </DockCell>
      {/* FaceTime */}
      <DockCell>
        <Tile id="ft" from="#84ec7c" to="#57be46" />
        <defs><Grad id="ftw" from="#ffffff" to="#c8efc0" /></defs>
        <rect x="12" y="21.500" width="36" height="33" rx="8" fill="url(#ftw)" />
        <path d="M50 34l12-10c1-.8 2-.4 2 1v26c0 1.400-1 1.800-2 1L50 42z" fill="url(#ftw)" />
      </DockCell>
      {/* Reminders */}
      <DockCell>
        <Tile id="rm" from="#ffffff" to="#f2f1ef" />
        {["#3478f6", "#e5493d", "#ec9a32"].map((c, i) => (
          <g key={c}>
            <circle cx="15" cy={19 + i * 19} r="5.800" fill="#fff" stroke={c} strokeWidth="1.500" />
            <circle cx="15" cy={19 + i * 19} r="3.900" fill={c} />
            <path d={`M29 ${19 + i * 19}h39`} stroke="#c3c2c6" strokeWidth="2" />
          </g>
        ))}
      </DockCell>
      {/* Freeform */}
      <DockCell>
        <Tile id="ffm" from="#ffffff" to="#fdfdfd" />
        <defs>
          <Grad id="ffo" from="#f2b23e" to="#ec5f66" />
          <Grad id="ffbl" from="#5fd6f9" to="#4c9ee0" />
        </defs>
        <circle cx="30" cy="45" r="21.500" fill="url(#ffo)" />
        <rect x="25" y="10" width="42" height="41" rx="4" fill="url(#ffbl)" />
        <path d="M25 26c14-4 27 8 27 25H29c-2 0-4-2-4-4z" fill="#9fa9d8" opacity="0.7" />
        <path d="M15 49c6-12 14-24 18-21 3 3-5 16-1 16 4 1 9-16 13-15 4 2-2 14 1 15 3 2 6-10 9-10 3 1 0 11 4 11 4-1 6-7 8-10" fill="none" stroke="#12395f" strokeWidth="3.800" strokeLinecap="round" />
      </DockCell>
      {/* TV */}
      <DockCell>
        <Tile id="tv" from="#2d3a36" to="#0f1416" />
        <FaApple x={7} y={22} size={29} color="#fff" />
        <text x="34" y="50" fontFamily="Inter" fontSize="34" fontWeight="400" fill="#fff" textLength="32">tv</text>
      </DockCell>
      {/* Music */}
      <DockCell>
        <Tile id="ms" from="#ee5f76" to="#e5393f" />
        <path d="M27 22c0-2 1-3.500 3-4l22-5.500c2-.5 3.500.5 3.500 2.500v34c0 5-3 8-8 8-4 0-6.500-2-6.500-5.500s3-5.500 7-6.500c2-.5 3-1 3-3V27l-19 4.500V54c0 5-3 8.500-8.500 8.500-4 0-6.500-2-6.500-5.500s3-5.500 7-6.500c2-.5 3-1 3-3z" fill="#fff" />
      </DockCell>
      {/* App Store */}
      <DockCell badge="7">
        <Tile id="as" from="#4eb2f2" to="#2a59d6" />
        <g stroke="#fff" strokeWidth="6" strokeLinecap="round" fill="none">
          <path d="M34 17l3.500 6M43 17L26 46" />
          <path d="M41 30l16 28" />
          <path d="M14 47h23M52 47h9" />
          <path d="M20.500 55.500L19 58" />
        </g>
      </DockCell>
      {/* Settings */}
      <DockCell>
        <Tile id="st" from="#d9e2e8" to="#8f8b88" />
        <circle cx="38" cy="38" r="32" fill="#2f3133" />
        {dialTicks.map((a) => (
          <path key={a} d="M38 7v5" stroke="#a5a8aa" strokeWidth="1.300" transform={`rotate(${a} 38 38)`} />
        ))}
        <circle cx="38" cy="38" r="25" fill="none" stroke="#a3a6a8" strokeWidth="3.500" />
        <circle cx="38" cy="38" r="15" fill="none" stroke="#77797b" strokeWidth="4" />
        <path d="M38 38h24M38 38L26 17.500M38 38L26 58.500" stroke="#b4b7b9" strokeWidth="3.200" />
        <circle cx="38" cy="38" r="4" fill="#c2c5c7" />
      </DockCell>
      {/* Rocket */}
      <DockCell>
        <defs>
          <linearGradient id="rk"><stop offset="0" stopColor="#5c5d5f" /><stop offset="0.45" stopColor="#c9cacb" /><stop offset="1" stopColor="#4c4d4f" /></linearGradient>
        </defs>
        <path d="M25 57c-4 5-4 14-1 25l4-2 3-14zM51 57c4 5 4 14 1 25l-4-2-3-14z" fill="#3f4043" />
        <path d="M38-7c10 18 16 34 16 46 0 10-5 20-8 26H30c-3-6-8-16-8-26C22 27 28 11 38-7z" fill="url(#rk)" />
        <path d="M34 65h9v9l-2 6h-4l-3-6z" fill="#222325" />
        <g transform="translate(24 19) scale(1.220 1.350)"><PythonMark /></g>
      </DockCell>
      {/* Slack */}
      <DockCell dot={dot}>
        <Tile id="sl" from="#ffffff" to="#f5f5f5" />
        <g transform="translate(11.500 11.500) scale(0.980)">
          <path d="M14 5.500a5.500 5.500 0 0 1 11 0V11h-5.500A5.500 5.500 0 0 1 14 5.500z" fill="#6ac4ea" />
          <rect x="0" y="14" width="25" height="11" rx="5.500" fill="#6ac4ea" />
          <rect x="28.500" y="0" width="11" height="25" rx="5.500" fill="#5eb285" />
          <path d="M48.500 14a5.500 5.500 0 0 1 0 11H43v-5.500a5.500 5.500 0 0 1 5.500-5.500z" fill="#5eb285" />
          <rect x="28.500" y="28.500" width="25.500" height="11" rx="5.500" fill="#e3b34c" />
          <path d="M28.500 43H34a5.500 5.500 0 1 1-5.500 5.500z" fill="#e3b34c" />
          <rect x="14" y="28.500" width="11" height="25.500" rx="5.500" fill="#cf375c" />
          <path d="M5.500 28.500H11V34a5.500 5.500 0 1 1-5.500-5.500z" fill="#cf375c" />
        </g>
      </DockCell>
      {/* Zoom */}
      <DockCell dot={greenDot}>
        <Tile id="zm" from="#2f6bf2" to="#1b45c4" />
        <text x="11" y="43.500" fontFamily="Inter" fontSize="21" fontWeight="500" fill="#fff" textLength="54">zoom</text>
      </DockCell>
      {/* Telegram */}
      <DockCell>
        <Tile id="tg" from="#ffffff" to="#e6e6e8" />
        <defs><Grad id="tgb" from="#62b8ef" to="#3d8fd0" /></defs>
        <circle cx="38" cy="38" r="33" fill="url(#tgb)" />
        <path d="M18 38l33-13c1.500-.6 2.500.3 2.200 2L49 52c-.3 1.500-1.500 2-3 1L34 43z" fill="#fff" />
        <path d="M18 38l16 5 14-13-24 11z" fill="#dfe9f1" />
      </DockCell>
      {/* Chrome */}
      <DockCell>
        <Tile id="ch" from="#fbfbfb" to="#eef3ee" />
        <circle cx="38" cy="38" r="33" fill="#dc5040" />
        <path d="M38 22.500h29a33 33 0 0 1-29 48.500L51 46z" fill="#f3bf48" />
        <path d="M9.500 21.500A33 33 0 0 0 38 71l13.500-25L25 46z" fill="#4c9c55" />
        <circle cx="38" cy="37" r="16" fill="#fff" />
        <circle cx="38" cy="37" r="13" fill="#3e78e8" />
      </DockCell>
      {/* PyCharm */}
      <DockCell dot={darkGreenDot}>
        <g clipPath="url(#tile)">
          <rect width="76" height="76" fill="#72e387" />
          <path d="M44 0h16v26L40 12z" fill="#a9f06c" />
          <path d="M60 0h16v32l-16 4z" fill="#56c2e0" />
          <path d="M66 32l10-4v48H50z" fill="#f7f364" />
          <path d="M18 68l46-8v16H20z" fill="#f2f25f" />
          <path d="M0 46l16-26v56H6z" fill="#b4ec5a" opacity="0.7" />
        </g>
        <rect x="12.500" y="12.500" width="51" height="51" fill="#000" />
        <text x="17.500" y="37" fontFamily="Inter" fontSize="26" fontWeight="700" fill="#fff" textLength="37">PC</text>
        <rect x="19" y="54" width="19" height="3.500" fill="#fff" />
      </DockCell>
      {/* WPS */}
      <DockCell>
        <defs>
          <linearGradient id="wps" x1="0.3" y1="0" x2="0.65" y2="1"><stop offset="0" stopColor="#7f6cf8" /><stop offset="0.2" stopColor="#8a66f0" /><stop offset="0.5" stopColor="#c23fae" /><stop offset="0.85" stopColor="#ee4046" /></linearGradient>
        </defs>
        <circle cx="38" cy="38" r="41" fill="url(#wps)" />
        <path d="M32.500 33.500l-2.500-6c-.5-1.200-1.200-1.800-2.500-1.800H14.300L26.500 55c.8 2 2.700 2 3.500 0l11.500-26.500c.8-1.800 2-2.800 4-2.800H62L49.800 55c-.8 2-2.700 2-3.300 0l-2.800-6" fill="none" stroke="#fff" strokeWidth="6.800" strokeLinejoin="round" />
        <path d="M60.500 9l1.800 3.700L66 14.500l-3.700 1.800L60.500 20l-1.800-3.700L55 14.500l3.700-1.800zM67 16.500l1.200 2.800 2.800 1.200-2.800 1.200L67 24.500l-1.200-2.800-2.800-1.200 2.800-1.200z" fill="#fff" />
      </DockCell>
      {/* IDLE */}
      <DockCell>
        <path d="M-3.700 5.300L55-5.300 75.600 63 10.300 77.700z" fill="#fbf9f7" stroke="#d9d5cf" />
        <g transform="translate(10 13.500) scale(2 1.820)"><PythonMark /></g>
        <path d="M77 21c1-1.500 4.500-.5 4.500 1.500L80 31l-15 33-6-3 14-31z" fill="#23262c" />
        <path d="M63 53l6.500 3-7 15-10.500 11-1 .5.500-2 2-12z" fill="#b9b7b2" />
        <path d="M78 27L64 58M58 62l-5 13" stroke="#dfe3e8" strokeWidth="1.300" />
      </DockCell>
      {/* Terminal */}
      <DockCell>
        <Tile id="tm" from="#d2e0ea" to="#77787a" />
        <rect x="2.500" y="2.500" width="71" height="71" rx="15" fill="#000" />
        <rect x="8" y="8" width="60" height="60" rx="10" fill="#252525" />
        <path d="M14 14l8 5.500-8 5.500" fill="none" stroke="#fff" strokeWidth="2.400" />
        <path d="M26 28.500h11" stroke="#fff" strokeWidth="2.400" />
      </DockCell>
      <DockSeparator />
      {/* imo */}
      <DockCell>
        <Tile id="im" from="#ffffff" to="#ffffff" />
        <path d="M38 12.500a25.500 25.500 0 1 1-11 48.500c-5 1-9 1-14-2 3-1 4-3 4-5A25.500 25.500 0 0 1 38 12.500z" fill="#fff" stroke="#2b559f" strokeWidth="4.500" />
        <text x="20" y="44.500" fontFamily="Inter" fontSize="19" fontWeight="700" fill="#27519b" textLength="36">imo</text>
      </DockCell>
      {/* WhatsApp */}
      <DockCell>
        <Tile id="wa" from="#88f080" to="#58c048" />
        <FaWhatsapp x={4.5} y={3.5} size={68} color="#f6f6f6" />
      </DockCell>
      {/* Notes */}
      <DockCell>
        <Tile id="nt2" from="#d9bf62" to="#d3bb62" />
        <defs><Grad id="nt" from="#fdf09a" to="#ede18f" /></defs>
        <path d="M17 0h42c10 0 17 7 17 17v27c-8 14-20 23-38 24H14C6 68 0 62 0 54V17C0 7 7 0 17 0z" fill="url(#nt)" />
        <path d="M12 26c2-5 4-14 6-14s0 13 3 13 6-10 9-9c3 0 2 7 6 7h28M12 36.500h52M12 50h29" fill="none" stroke="#dccb6c" strokeWidth="4.200" />
      </DockCell>
      <DockSeparator />
      {/* Minimised windows */}
      <DockCell>
        <path d="M22-7h32v12H22zM20-2h36v10H20z" fill="#fff" stroke="#333" strokeWidth="1" />
        <path d="M24-4h28M22 1h32" stroke="#111" strokeWidth="2" />
        <rect x="18" y="2" width="40" height="79" fill="#fbfbfb" />
        <rect x="22" y="5.500" width="32" height="12" fill="#000" />
        <rect x="22" y="63" width="32" height="9.500" fill="#000" />
        <path d="M24 24h28M24 27h28M24 30h28M24 33h28M24 36h28M40 43h12M40 46h12M40 49h12M40 52h12M24 56h28" stroke="#9aa0a8" strokeWidth="1.400" strokeDasharray="3 1" />
        <path d="M26 44c4-3 6 6 9 2M27 50c3-2 5 3 8 0" stroke="#6c78c8" strokeWidth="1.200" fill="none" />
      </DockCell>
      {/* Trash */}
      <DockCell>
        <defs>
          <linearGradient id="tr"><stop offset="0" stopColor="#c9cacc" /><stop offset="0.3" stopColor="#e4e4e5" /><stop offset="0.7" stopColor="#d6d6d7" /><stop offset="1" stopColor="#bdbebf" /></linearGradient>
        </defs>
        <path d="M5 3c2 8 64 8 66 0l-8 70c-1 5-6 7-25 7s-24-2-25-7z" fill="url(#tr)" opacity="0.93" />
        <ellipse cx="38" cy="4" rx="33" ry="9" fill="#8d8e90" stroke="#dededf" strokeWidth="1.500" />
        <path d="M8 4l6-9 8 2 5-5 7 5 8-5 8 5 8-1 7 6 2 5c-10 6-49 7-59-3z" fill="#e9eaeb" />
        <path d="M44-2l7-3 7 6-5 7-10-1z" fill="#4f5f78" />
        <path d="M22 3l8 1-3 6-7-3z" fill="#5cc3e0" />
        <path d="M40 10l4-8 3 7z" fill="#c4653c" />
        <path d="M14 10l6-5 4 6zM30-2l5 4-4 3zM52 2l8 1-5 6z" fill="#2c2e33" />
        <path d="M32 5l7-7 2 12h-8z" fill="#ffffff" />
      </DockCell>
    </div>
  );
}

export default function App() {
  return (
    <div className="h-[1912px] w-[2940px] overflow-hidden bg-black">
      <SharedGradients />
      <MenuBar />
      <div className="h-[2px] bg-[linear-gradient(90deg,#000_0%,#000_20%,#3e6e75_20.100%,#2b5570_23%,#000_24%,#000_35.500%,#9aa3a5_35.600%,#5f8f8e_42%,#3f6f76_48%,#1d4157_52%,#020c12_58%,#000_100%)]" />
      <div className="h-[1700px] overflow-hidden rounded-[22px]">
        <TabStrip />
        <NavBar />
        <Page />
      </div>
      <div className="h-[138px] bg-[linear-gradient(90deg,#06171c_0%,#000_4%,#000_18.200%,#2e4a6a_18.300%,#9fcfcf_18.400%,#9fcfcf_18.700%,#0d1a2c_18.800%,#000_22%,#000_50.400%,#1f4634_50.500%,#1f4634_50.900%,#dfe6e4_51%,#a9dccb_54%,#7fd4b4_57%,#4f9576_60%,#2f6a50_64%,#12301f_69%,#0d2a1a_74%,#06150d_79%,#000_86%)] pt-[4px]">
        <Dock />
      </div>
    </div>
  );
}
